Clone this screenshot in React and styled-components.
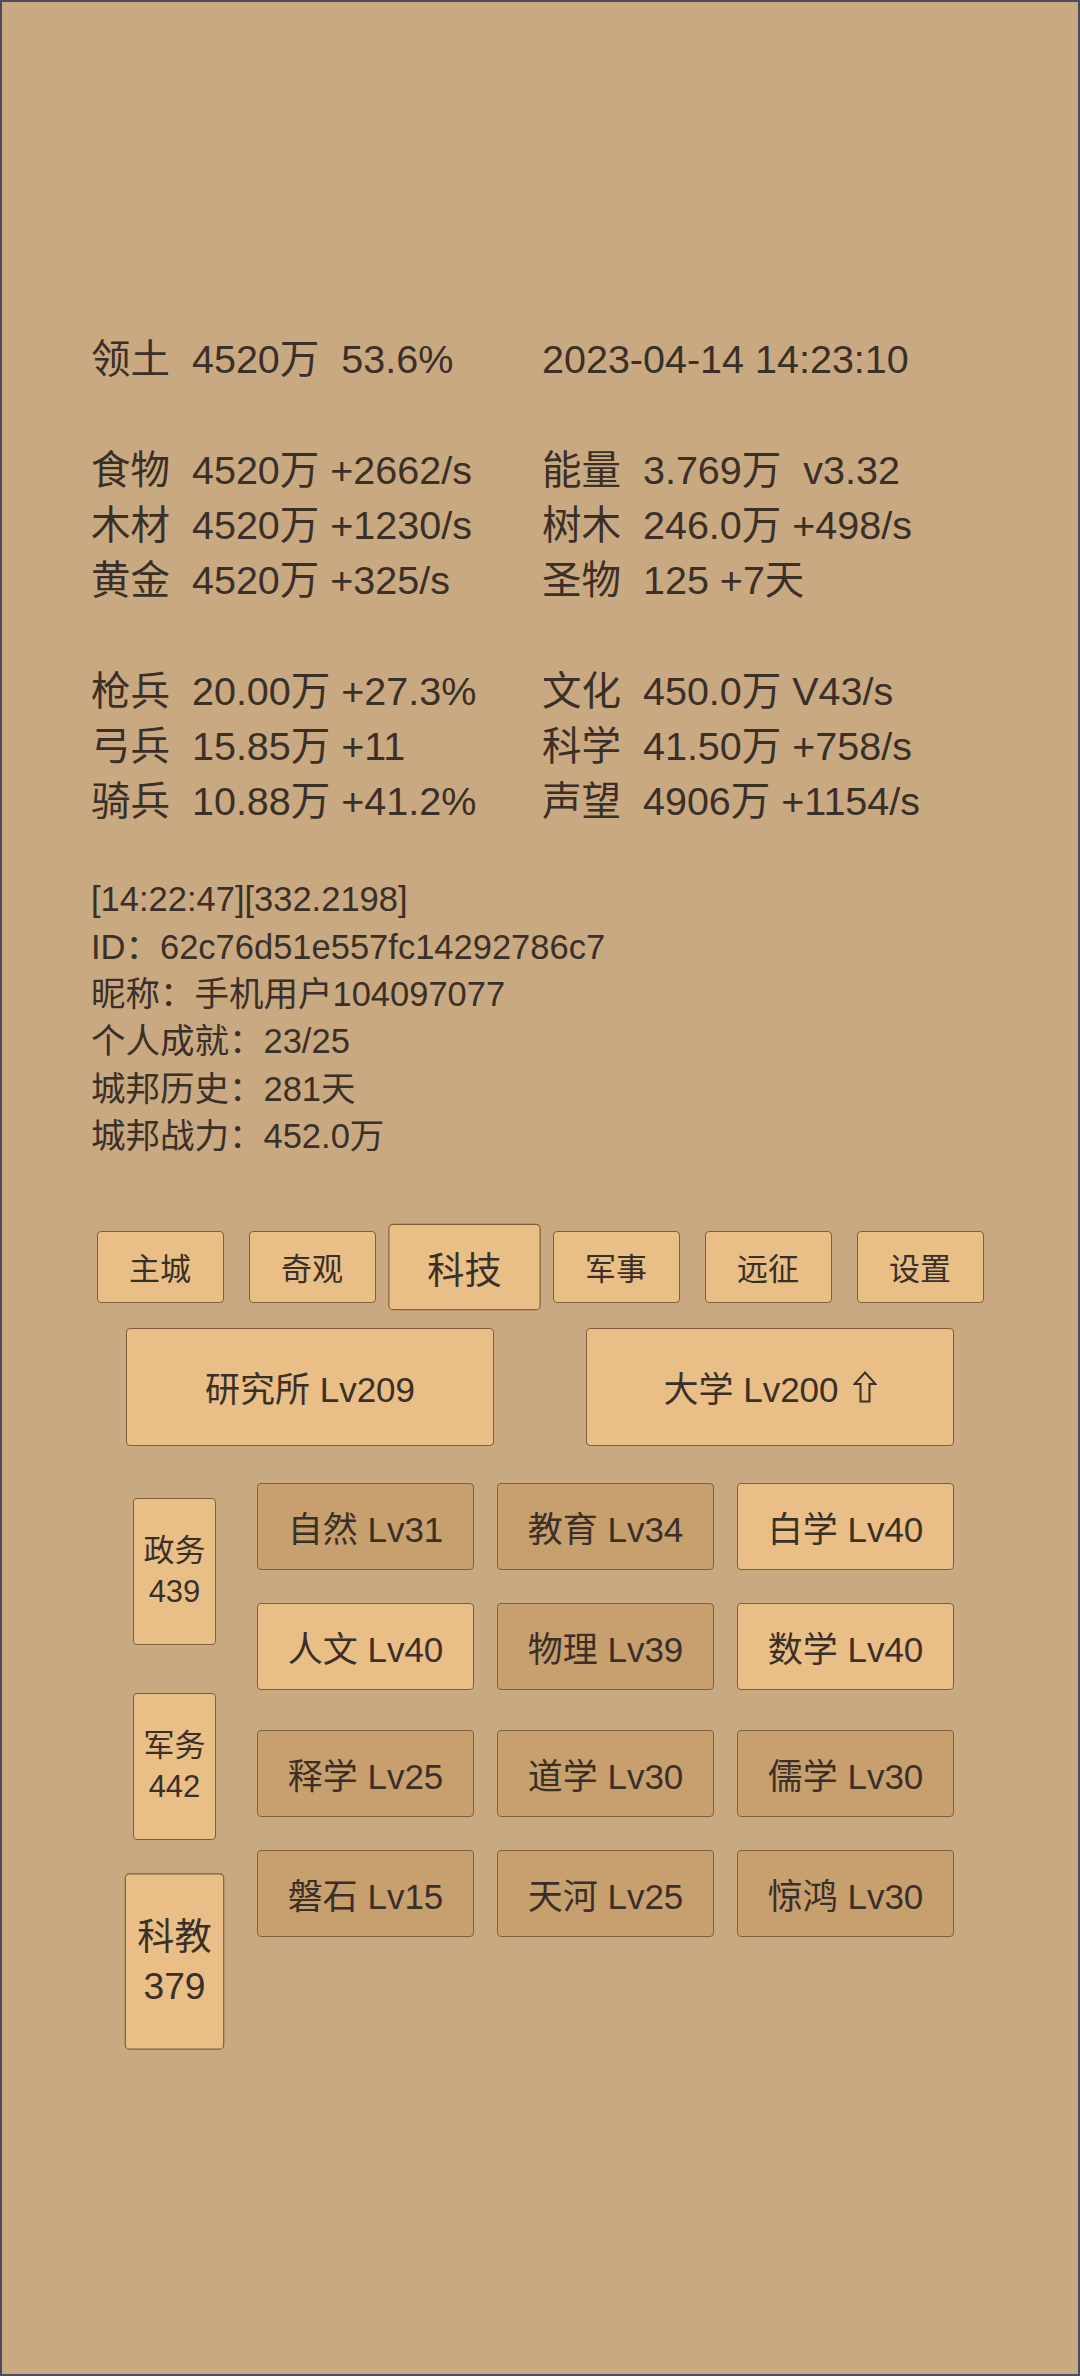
import React from "react";
import styled, { createGlobalStyle } from "styled-components";

const Global = createGlobalStyle`
  html, body { margin: 0; padding: 0; background: #c9a982; }
  * { box-sizing: border-box; }
`;

const FONT = `"Liberation Sans", "Noto Sans CJK SC", "Noto Sans", sans-serif`;

const Page = styled.div`
  width: 1080px;
  height: 2376px;
  border: 2px solid #4a4b5e;
  background: #c9a982;
  color: #3a3027;
  font-family: ${FONT};
  overflow: hidden;
`;

const Stats = styled.div`
  padding: 330px 0 0 89px;
  display: grid;
  grid-template-columns: 451px auto;
  font-size: 39.5px;
  line-height: 55.25px;
`;

const Cell = styled.div`
  white-space: pre;
`;

const Blank = styled.div`
  grid-column: 1 / span 2;
  height: 55.25px;
`;

const Info = styled.div`
  margin-top: 47px;
  padding-left: 89px;
  font-size: 34.5px;
  line-height: 47.4px;
`;

const InfoLine = styled.div`
  white-space: pre;
`;

const Tabs = styled.div`
  margin-top: 70px;
  display: flex;
  justify-content: center;
  gap: 25px;
`;

const Btn = styled.div`
  display: flex;
  align-items: center;
  justify-content: center;
  background: ${(p) => (p.$dark ? "#c89f6f" : "#e9bf87")};
  border: 1px solid #80603a;
  border-radius: 4px;
  color: #3a3027;
  white-space: pre;
  transform: ${(p) => (p.$active ? "scale(1.2)" : "none")};
`;

const Tab = styled(Btn)`
  width: 127px;
  height: 72px;
  font-size: 31px;
`;

const Buildings = styled.div`
  margin-top: 25px;
  display: flex;
  justify-content: center;
  gap: 92px;
`;

const Building = styled(Btn)`
  width: 368px;
  height: 118px;
  font-size: 35px;
`;

const ArrowIcon = styled.svg`
  width: 24px;
  height: 32px;
  margin-left: 14px;
  flex: none;
`;

const Lower = styled.div`
  margin-top: 37px;
  padding-left: 131px;
  display: flex;
  align-items: flex-start;
  gap: 41px;
`;

const SideCol = styled.div`
  margin-top: 15px;
  display: flex;
  flex-direction: column;
  gap: 48px;
  width: 83px;
`;

const Side = styled(Btn)`
  width: 83px;
  height: 147px;
  flex-direction: column;
  font-size: 31px;
  line-height: 41px;
  text-align: center;
`;

const Groups = styled.div`
  display: flex;
  flex-direction: column;
  gap: 40px;
`;

const Grid = styled.div`
  display: grid;
  grid-template-columns: repeat(3, 217px);
  column-gap: 23px;
  row-gap: 33px;
`;

const Tech = styled(Btn)`
  height: 87px;
  font-size: 35px;
`;

const statsA = [["领土  4520万  53.6%", "2023-04-14 14:23:10"]];
const statsB = [
  ["食物  4520万 +2662/s", "能量  3.769万  v3.32"],
  ["木材  4520万 +1230/s", "树木  246.0万 +498/s"],
  ["黄金  4520万 +325/s", "圣物  125 +7天"],
];
const statsC = [
  ["枪兵  20.00万 +27.3%", "文化  450.0万 V43/s"],
  ["弓兵  15.85万 +11", "科学  41.50万 +758/s"],
  ["骑兵  10.88万 +41.2%", "声望  4906万 +1154/s"],
];

const info = [
  "[14:22:47][332.2198]",
  "ID：62c76d51e557fc14292786c7",
  "昵称：手机用户104097077",
  "个人成就：23/25",
  "城邦历史：281天",
  "城邦战力：452.0万",
];

const tabs = ["主城", "奇观", "科技", "军事", "远征", "设置"];

const groups = [
  [
    ["自然 Lv31", true],
    ["教育 Lv34", true],
    ["白学 Lv40", false],
    ["人文 Lv40", false],
    ["物理 Lv39", true],
    ["数学 Lv40", false],
  ],
  [
    ["释学 Lv25", true],
    ["道学 Lv30", true],
    ["儒学 Lv30", true],
    ["磐石 Lv15", true],
    ["天河 Lv25", true],
    ["惊鸿 Lv30", true],
  ],
];

const sides = [
  ["政务", "439", false],
  ["军务", "442", false],
  ["科教", "379", true],
];

const renderRows = (rows) =>
  rows.map(([a, b], i) => (
    <React.Fragment key={a + i}>
      <Cell>{a}</Cell>
      <Cell>{b}</Cell>
    </React.Fragment>
  ));

const UpArrow = () => (
  <ArrowIcon viewBox="0 0 24 32" aria-hidden="true">
    <path
      d="M12 1.5 L22.5 13 L16.5 13 L16.5 30.5 L7.5 30.5 L7.5 13 L1.5 13 Z"
      fill="none"
      stroke="#3a3027"
      strokeWidth="2"
      strokeLinejoin="miter"
    />
  </ArrowIcon>
);

export default function App() {
  return (
    <>
      <Global />
      <Page>
        <Stats>
          {renderRows(statsA)}
          <Blank />
          {renderRows(statsB)}
          <Blank />
          {renderRows(statsC)}
        </Stats>
        <Info>
          {info.map((l) => (
            <InfoLine key={l}>{l}</InfoLine>
          ))}
        </Info>
        <Tabs>
          {tabs.map((t) => (
            <Tab key={t} $active={t === "科技"}>
              {t}
            </Tab>
          ))}
        </Tabs>
        <Buildings>
          <Building>研究所 Lv209</Building>
          <Building>
            大学 Lv200
            <UpArrow />
          </Building>
        </Buildings>
        <Lower>
          <SideCol>
            {sides.map(([a, b, act]) => (
              <Side key={a} $active={act}>
                <div>{a}</div>
                <div>{b}</div>
              </Side>
            ))}
          </SideCol>
          <Groups>
            {groups.map((g, gi) => (
              <Grid key={gi}>
                {g.map(([label, dark]) => (
                  <Tech key={label} $dark={dark}>
                    {label}
                  </Tech>
                ))}
              </Grid>
            ))}
          </Groups>
        </Lower>
      </Page>
    </>
  );
}
